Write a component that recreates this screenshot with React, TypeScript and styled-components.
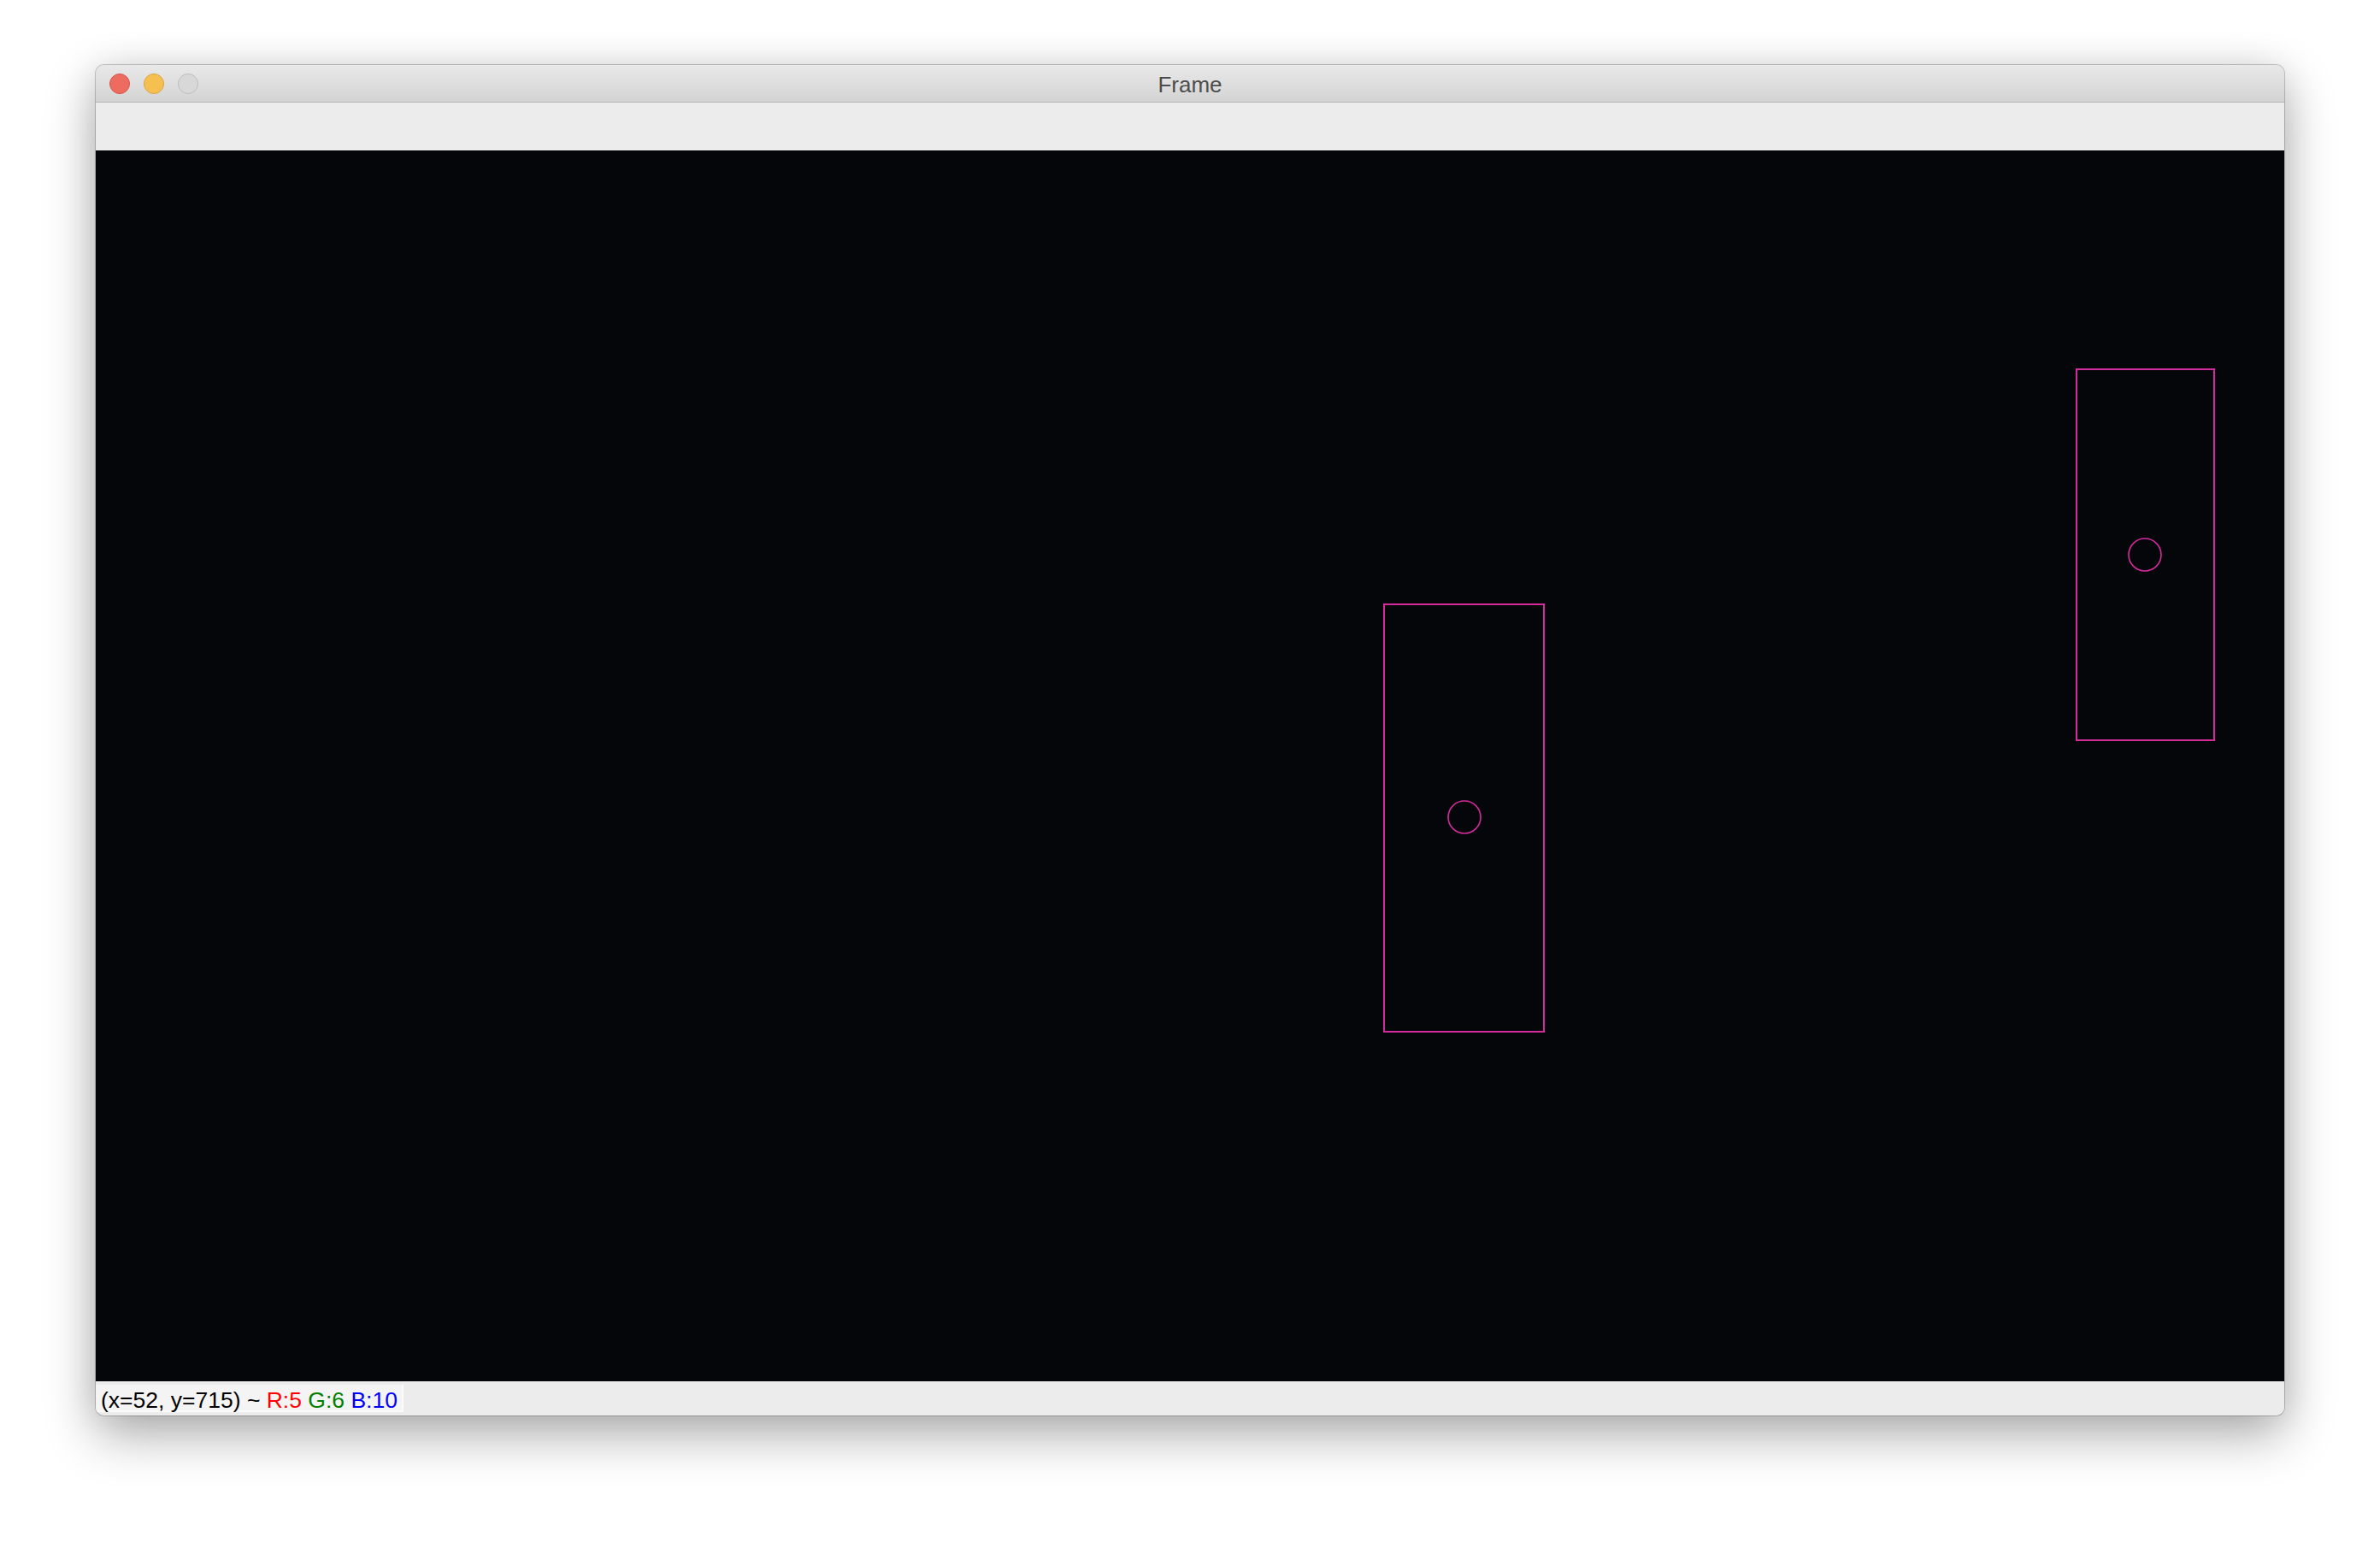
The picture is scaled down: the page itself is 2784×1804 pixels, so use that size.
import React from 'react';
import styled, { createGlobalStyle } from 'styled-components';

const GlobalStyle = createGlobalStyle`
  html, body {
    margin: 0;
    padding: 0;
    background: #ffffff;
  }
  body {
    width: 2784px;
    height: 1804px;
    overflow: hidden;
    font-family: "Liberation Sans", Arial, sans-serif;
  }
`;

const Page = styled.div`
  display: flex;
  align-items: flex-start;
  padding: 76px 0 0 112px;
  height: 1804px;
  box-sizing: border-box;
`;

const Window = styled.div`
  width: 2560px;
  display: flex;
  flex-direction: column;
  border-radius: 10px;
  overflow: hidden;
  background: #ececec;
  box-shadow:
    0 0 0 1px rgba(0, 0, 0, 0.2),
    0 22px 60px rgba(0, 0, 0, 0.33),
    0 0 40px rgba(0, 0, 0, 0.07);
`;

const TitleBar = styled.div`
  position: relative;
  height: 43px;
  display: flex;
  align-items: center;
  padding-left: 16px;
  gap: 16px;
  background: linear-gradient(#e9e9e9, #d3d3d3);
  border-bottom: 1px solid #b4b4b4;
`;

const Light = styled.span<{ $fill: string; $ring: string }>`
  width: 22px;
  height: 22px;
  border-radius: 50%;
  background: ${(p) => p.$fill};
  border: 1px solid ${(p) => p.$ring};
`;

const Title = styled.div`
  position: absolute;
  left: 0;
  right: 0;
  padding-top: 3px;
  text-align: center;
  font-size: 26px;
  color: #4d4d4d;
  pointer-events: none;
`;

const Toolbar = styled.div`
  height: 56px;
  background: #ececec;
`;

const Canvas = styled.div`
  width: 2560px;
  height: 1440px;
  background: #05060a;
`;

const StatusBar = styled.div`
  height: 40px;
  background: #ececec;
  display: flex;
  align-items: flex-start;
`;

const StatusLabel = styled.div`
  margin-top: 4px;
  height: 30px;
  line-height: 36px;
  padding: 0 5px 0 6px;
  background: #f4f4f4;
  border-right: 2px solid #fbfbfb;
  border-bottom: 2px solid #fbfbfb;
  font-size: 26.5px;
  color: #000;
  white-space: pre;
`;

const Channel = styled.span<{ $color: string }>`
  color: ${(p) => p.$color};
`;

const boxes = [
  { x: 1506, y: 530, w: 189, h: 502, cx: 1601, cy: 780 },
  { x: 2316, y: 255, w: 163, h: 436, cx: 2397, cy: 473 },
];

export default function App() {
  return (
    <>
      <GlobalStyle />
      <Page>
        <Window>
          <TitleBar>
            <Light $fill="#ee6b5f" $ring="#d4564b" />
            <Light $fill="#f6c050" $ring="#d9a441" />
            <Light $fill="#d8d8d8" $ring="#bdbdbd" />
            <Title>Frame</Title>
          </TitleBar>
          <Toolbar />
          <Canvas>
            <svg width="2560" height="1440" viewBox="0 0 2560 1440" style={{ display: 'block' }}>
              {boxes.map((b, i) => (
                <g key={i} fill="none" stroke="#d42b9c">
                  <rect x={b.x + 1} y={b.y + 1} width={b.w - 2} height={b.h - 2} strokeWidth={2} />
                  <circle cx={b.cx} cy={b.cy} r={19} strokeWidth={1.6} />
                </g>
              ))}
            </svg>
          </Canvas>
          <StatusBar>
            <StatusLabel>
              {'(x=52, y=715) ~ '}
              <Channel $color="#ff0000">R:5</Channel>
              {' '}
              <Channel $color="#008000">G:6</Channel>
              {' '}
              <Channel $color="#0000ff">B:10</Channel>
            </StatusLabel>
          </StatusBar>
        </Window>
      </Page>
    </>
  );
}
